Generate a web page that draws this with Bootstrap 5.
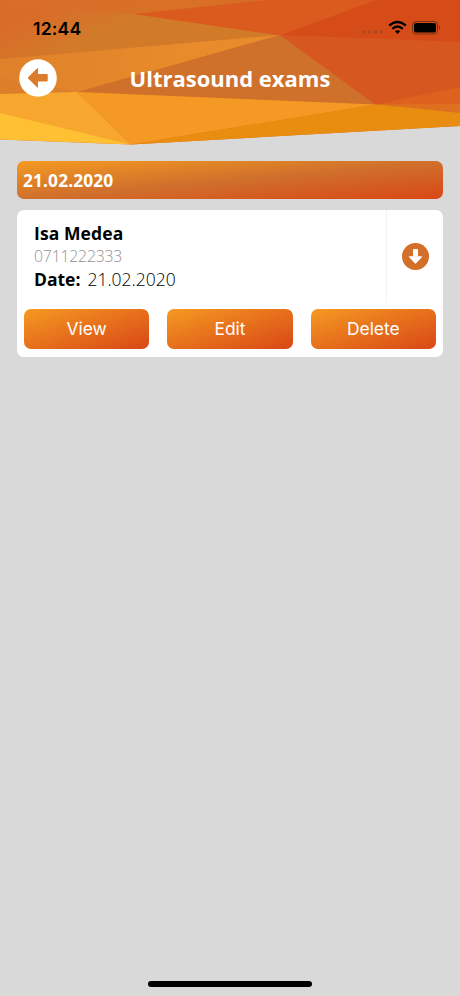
<!DOCTYPE html>
<html lang="en">
<head>
<meta charset="utf-8">
<meta name="viewport" content="width=device-width, initial-scale=1">
<title>Ultrasound exams</title>
<link href="https://cdn.jsdelivr.net/npm/bootstrap@5.3.0/dist/css/bootstrap.min.css" rel="stylesheet">
<style>
body{background:#d9d9d9;font-family:"Open Sans","Noto Sans",sans-serif;color:#000}
.app-screen{height:996px;overflow:hidden}
.app-header{height:145px}
.header-art{position:absolute;inset:0;z-index:0}
.status-bar{height:56px;padding:0 19px 0 33px}
.clock{font:600 17.6px/1 Inter,sans-serif;letter-spacing:.2px;padding-top:1px}
.title-bar{height:44px;padding:0 19px;grid-template-columns:38px 1fr 38px}
.page-title{font-size:22px;line-height:30px;font-weight:700;padding-bottom:1px}
.back-btn{width:38px;height:38px}
.content{padding:16px 17px 0}
.date-head{height:38px;padding:2px 0 0 6px;font-size:17.3px;letter-spacing:.14px;border-radius:7px;background:linear-gradient(to bottom right,#f49a22,#d0702c 50%,#d84816)}
.exam-card{margin-top:11px;height:147px;border:0;border-radius:7px}
.exam-info{height:93px;padding:12px 0 0 17px;font-size:17.5px;line-height:23px}
.exam-name{letter-spacing:.1px}
.exam-phone{font-size:15.8px;font-weight:300;color:#929292;letter-spacing:-.2px}
.exam-date{font-weight:300;margin-left:7px}
.exam-toggle{width:57px;border-left:1px solid #f2f2f2;padding-bottom:1px}
.exam-actions{padding:6px 7px 8px 7px;gap:18px}
.btn-exam{height:40px;padding:0;border:0;border-radius:7px;color:#fff;font:400 17.4px/40px Inter,sans-serif;background:linear-gradient(to bottom right,#f49a22,#e7701c 50%,#d84816)}
.btn-exam:hover{color:#fff}
.home-bar{width:164px;height:6px;margin-bottom:9px;border-radius:3px;background:#000}
</style>
</head>
<body>
<div class="app-screen d-flex flex-column">
  <header class="app-header position-relative">
    <svg class="header-art" width="460" height="145" viewBox="0 0 460 145" aria-hidden="true">
      <defs>
        <linearGradient id="sky" x1="0" y1="0" x2="1" y2="0"><stop offset="0" stop-color="#d96c29"/><stop offset=".5" stop-color="#d87126"/><stop offset="1" stop-color="#d9601f"/></linearGradient>
        <linearGradient id="ochre" gradientUnits="userSpaceOnUse" x1="35" y1="15" x2="55" y2="58"><stop offset="0" stop-color="#d96c29"/><stop offset="1" stop-color="#d17b29"/></linearGradient>
        <linearGradient id="wedge" gradientUnits="userSpaceOnUse" x1="0" y1="0" x2="200" y2="0"><stop offset="0" stop-color="#df812a"/><stop offset="1" stop-color="#e88c2b"/></linearGradient>
      </defs>
      <path fill="#d96c29" d="M0 0H460V126L131 144.500L0 139.500Z"/>
      <path fill="url(#sky)" d="M0 0H376L280 36L134 14L0 40Z"/>
      <path fill="url(#ochre)" d="M0 5L134 14L280 35L0 59Z"/>
      <path fill="#db5a1d" d="M134 14L268 0H376L280 35.500Z"/>
      <path fill="url(#wedge)" d="M0 59L280 35L77 93L0 95Z"/>
      <path fill="#dd7e2b" d="M0 78L77 92L0 95Z"/>
      <path fill="#cf702b" d="M77 92L280 35L376 105Z"/>
      <path fill="#d64c19" d="M280 35.500L376 0H460V43Z"/>
      <path fill="#d65820" d="M280 35L460 42V88L376 105Z"/>
      <path fill="#df611e" d="M376 104.500L460 87V105Z"/>
      <path fill="#df701f" d="M376 104.500L460 104V114Z"/>
      <path fill="#f8a72e" d="M0 94L77 92L131 144.500L0 114Z"/>
      <path fill="#ffc033" d="M0 113L131 144.500L0 139.500Z"/>
      <path fill="#f49a24" d="M77 92L376 104.500L131 144.500Z"/>
      <path fill="#e98d10" d="M376 104.500L460 113V126L131 144.500Z"/>
    </svg>
    <div class="status-bar position-relative d-flex align-items-center justify-content-between">
      <span class="clock">12:44</span>
      <svg width="80" height="20" viewBox="0 0 80 20" aria-hidden="true">
        <g fill="#a9481c"><rect x="1.500" y="12.500" width="3" height="3" rx="1"/><rect x="7.200" y="12.500" width="3" height="3" rx="1"/><rect x="12.900" y="12.500" width="3" height="3" rx="1"/><rect x="18.600" y="12.500" width="3" height="3" rx="1"/></g>
        <g fill="none" stroke="#000" stroke-width="2.300"><path d="M28.300 7.700Q36.300 .400 44.900 7.700"/><path d="M31.300 10.800Q36.500 6.300 41.800 10.800"/></g>
        <path d="M33.900 13.200Q36.500 11.100 39.200 13.200L36.500 16Z"/>
        <rect x="51.500" y="3.500" width="25" height="12.500" rx="3.500" fill="none" stroke="#792f13"/>
        <rect x="53" y="5" width="22" height="9.500" rx="2"/>
        <path fill="#792f13" d="M78 7.500Q80 9.700 78 12Z"/>
      </svg>
    </div>
    <div class="title-bar position-relative d-grid align-items-center">
      <a href="#" class="back-btn d-block" aria-label="Back">
        <svg class="d-block" width="38" height="38" viewBox="0 0 38 38"><circle cx="19" cy="19" r="18.800" fill="#fff"/><path fill="#dc7c2a" stroke="#dc7c2a" stroke-linejoin="round" d="M9 18.800L18.500 9.500V15.500H28.200V22H18.500V28.200Z"/></svg>
      </a>
      <h1 class="page-title text-white text-center m-0">Ultrasound exams</h1>
    </div>
  </header>
  <main class="content flex-grow-1">
    <div class="date-head d-flex align-items-center text-white fw-bold">21.02.2020</div>
    <section class="card exam-card">
      <div class="d-flex">
        <div class="exam-info flex-grow-1">
          <div class="exam-name fw-bold">Isa Medea</div>
          <div class="exam-phone">0711222333</div>
          <div class="d-flex"><strong>Date:</strong><span class="exam-date">21.02.2020</span></div>
        </div>
        <div class="exam-toggle d-flex align-items-center justify-content-center">
          <svg width="27" height="27" viewBox="0 0 27 27" role="img" aria-label="Expand"><circle cx="13.500" cy="13.500" r="13.500" fill="#d36f28"/><path fill="#fff" stroke="#fff" stroke-linejoin="round" d="M11.500 6.500H15.500V13.800H19.700L13.500 20.400L7.300 13.800H11.500Z"/></svg>
        </div>
      </div>
      <div class="exam-actions d-flex">
        <button class="btn btn-exam flex-fill w-100">View</button>
        <button class="btn btn-exam flex-fill w-100">Edit</button>
        <button class="btn btn-exam flex-fill w-100">Delete</button>
      </div>
    </section>
  </main>
  <div class="home-bar align-self-center flex-shrink-0"></div>
</div>
<script src="https://cdn.jsdelivr.net/npm/bootstrap@5.3.0/dist/js/bootstrap.bundle.min.js"></script>
</body>
</html>
